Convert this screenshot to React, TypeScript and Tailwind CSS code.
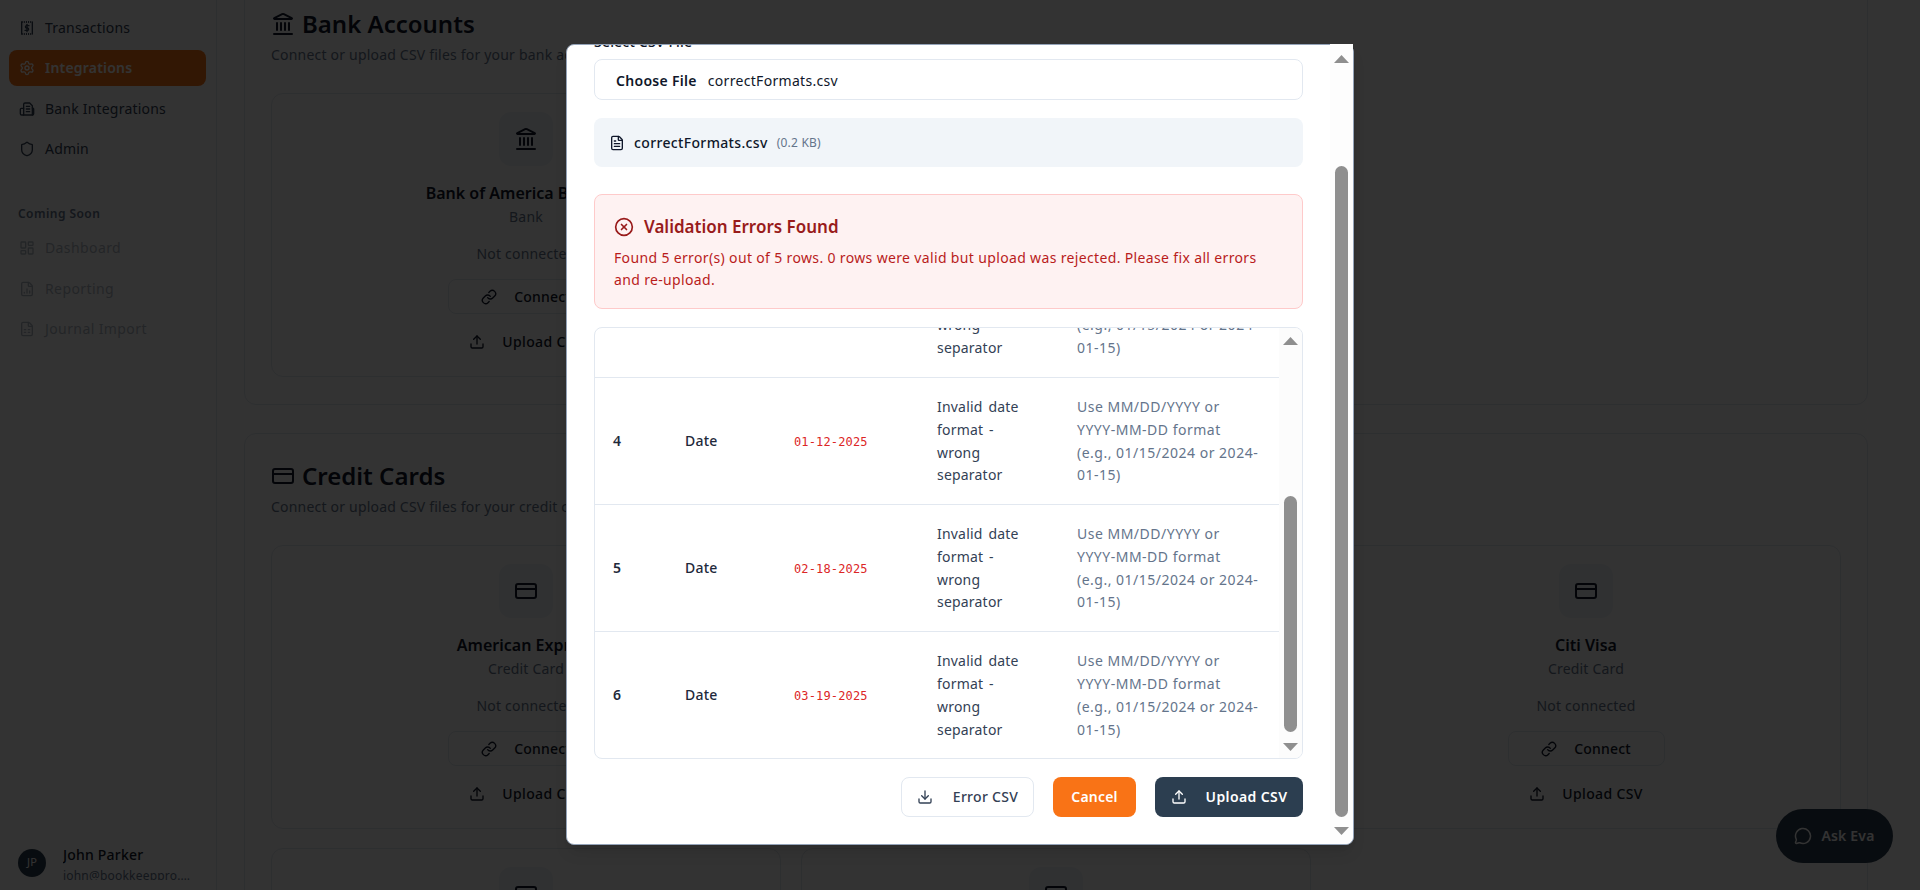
import React from 'react';
import {
  CircleX,
  CreditCard,
  Download,
  FileChartColumn,
  FileSpreadsheet,
  FileText,
  Landmark,
  LayoutDashboard,
  Link,
  MessageCircle,
  Settings,
  Shield,
  Upload,
} from 'lucide-react';

function TransactionsIcon({ size = 16 }: { size?: number }) {
  return (
    <svg width={size} height={size} viewBox="0 0 24 24" fill="none" stroke="currentColor" strokeWidth="2" strokeLinecap="round">
      <path d="M4 3v18" />
      <path d="M20 3v18" />
      <path d="M4 3h16" strokeDasharray="1.5 1.7" strokeLinecap="butt" strokeWidth="3" />
      <path d="M4 21h16" strokeDasharray="1.5 1.7" strokeLinecap="butt" strokeWidth="3" />
      <path d="M12 6.5v11" />
      <path d="M15 8.5h-4a1.8 1.8 0 0 0 0 3.5h2a1.8 1.8 0 0 1 0 3.5H9" />
    </svg>
  );
}

function BuildingIcon({ size = 16 }: { size?: number }) {
  return (
    <svg width={size} height={size} viewBox="0 0 24 24" fill="none" stroke="currentColor" strokeWidth="2" strokeLinecap="round" strokeLinejoin="round">
      <path d="M7 21V5a2 2 0 0 1 2-2h7l4 4v14" />
      <path d="M7 11H3.5A1.5 1.5 0 0 0 2 12.5V19a2 2 0 0 0 2 2h16a2 2 0 0 0 2-2v-7a1.5 1.5 0 0 0-2-1.4" />
      <path d="M11 8h5" />
      <path d="M11 12h5" />
      <path d="M11 16h5" />
    </svg>
  );
}

const navItems = [
  { label: 'Transactions', icon: TransactionsIcon },
  { label: 'Integrations', icon: Settings, active: true },
  { label: 'Bank Integrations', icon: BuildingIcon },
  { label: 'Admin', icon: Shield },
];

const soonItems = [
  { label: 'Dashboard', icon: LayoutDashboard },
  { label: 'Reporting', icon: FileChartColumn },
  { label: 'Journal Import', icon: FileSpreadsheet },
];

const errorRows = [
  { row: 3, value: '12-30-2024' },
  { row: 4, value: '01-12-2025' },
  { row: 5, value: '02-18-2025' },
  { row: 6, value: '03-19-2025' },
];

function Sidebar() {
  return (
    <aside className="w-[217px] shrink-0 h-full border-r border-[#e2e8f0] bg-white flex flex-col pl-[9px] pr-[10px] pt-[9.5px]">
      <nav className="flex flex-col gap-[4.5px]">
        {navItems.map((item) => (
          <div
            key={item.label}
            className={`h-9 flex items-center gap-[10px] pl-[10px] rounded-lg text-sm ${
              item.active ? 'bg-[#f97316] text-white font-semibold' : 'text-[#334155]'
            }`}
          >
            <item.icon size={16} />
            <span>{item.label}</span>
          </div>
        ))}
      </nav>
      <div className="mt-[39px] pl-[9px] text-xs font-semibold tracking-[0.45px] text-[#64748b]">Coming Soon</div>
      <nav className="mt-[8px] flex flex-col gap-[4.5px] opacity-50 tracking-[0.4px]">
        {soonItems.map((item) => (
          <div key={item.label} className="h-9 flex items-center gap-[10px] pl-[10px] text-sm text-[#64748b]">
            <item.icon size={16} />
            <span>{item.label}</span>
          </div>
        ))}
      </nav>
      <div className="mt-auto mb-[10px] flex items-center gap-[17px] pl-[9px]">
        <div className="w-[28px] h-[28px] rounded-full bg-[#2c3e50] text-white text-[11px] flex items-center justify-center">
          JP
        </div>
        <div className="w-[133px] h-[35px] overflow-hidden">
          <div className="text-sm font-medium leading-5 text-[#0f172a]">John Parker</div>
          <div className="mt-[1px] text-xs leading-5 text-[#64748b] truncate">john@bookkeeppro.com</div>
        </div>
      </div>
    </aside>
  );
}

function AccountCard({ name, kind, icon: Icon }: { name: string; kind: string; icon: typeof Landmark }) {
  return (
    <div className="h-[284px] rounded-xl border border-[#e2e8f0] bg-white flex flex-col items-center pt-[18px]">
      <div className="w-[54px] h-[54px] rounded-xl bg-[#f1f5f9] flex items-center justify-center text-[#0f172a]">
        <Icon size={24} />
      </div>
      <div className="mt-[15px] text-base font-semibold leading-6 tracking-normal text-[#0f172a]">{name}</div>
      <div className="text-sm leading-6 text-[#64748b]">{kind}</div>
      <div className="mt-[15px] text-sm leading-5 text-[#64748b]">Not connected</div>
      <button className="mt-[15px] w-[157px] h-[35px] rounded-lg border border-[#e2e8f0] flex items-center justify-center gap-[17px] text-sm font-medium text-[#0f172a]">
        <Link size={16} />
        Connect
      </button>
      <button className="mt-[10px] h-[35px] flex items-center gap-[17px] text-sm font-medium tracking-[0.35px] text-[#0f172a]">
        <Upload size={16} />
        Upload CSV
      </button>
    </div>
  );
}

function Section({
  title,
  subtitle,
  icon: Icon,
  children,
}: {
  title: string;
  subtitle: string;
  icon: typeof Landmark;
  children: React.ReactNode;
}) {
  return (
    <section className="rounded-xl border border-[#e2e8f0] bg-white px-[26px] pt-[26px] pb-[27px]">
      <div className="flex items-center gap-[7px] h-8">
        <Icon size={24} className="text-[#0f172a]" />
        <h2 className="text-2xl font-semibold tracking-normal text-[#0f172a]">{title}</h2>
      </div>
      <p className="mt-[5px] text-sm leading-5 text-[#64748b]">{subtitle}</p>
      <div className="mt-[28px] grid grid-cols-3 gap-x-5 gap-y-[19px]">{children}</div>
    </section>
  );
}

function ScrollArrow({ up, className }: { up?: boolean; className: string }) {
  return (
    <svg width="15" height="8" viewBox="0 0 15 8" className={`absolute ${className}`}>
      <polygon points={up ? '7.5,0 15,8 0,8' : '0,0 15,0 7.5,8'} fill="#8f8f8f" />
    </svg>
  );
}

function ErrorTable() {
  return (
    <div className="relative mt-[18px] h-[432px] rounded-lg border border-[#e2e8f0] overflow-hidden flex flex-col justify-end">
      <table className="w-[684px] shrink-0 table-fixed border-collapse text-sm leading-[22.75px]">
        <colgroup>
          <col className="w-[72px]" />
          <col className="w-[108px]" />
          <col className="w-[144px]" />
          <col className="w-[140px]" />
          <col className="w-[220px]" />
        </colgroup>
        <tbody>
          {errorRows.map((r, i) => (
            <tr key={r.row} className={`h-[127px] ${i > 0 ? 'border-t border-[#e2e8f0]' : ''}`}>
              <td className="pl-[18px] pt-[2px] font-semibold text-[#1e293b]">{r.row}</td>
              <td className="pl-[18px] pt-[2px] font-medium text-[#1e293b]">Date</td>
              <td className="pl-[19px] pt-[2px] font-['DejaVu_Sans_Mono',monospace] text-xs tracking-[0.15px] text-[#dc2626]">
                {r.value}
              </td>
              <td className="pl-[18px] pt-[2px] text-[#334155] tracking-[0.2px] [word-spacing:2px]">
                Invalid date
                <br />
                format -
                <br />
                wrong
                <br />
                separator
              </td>
              <td className="pl-[18px] pt-[2px] text-[#64748b] whitespace-nowrap tracking-[0.5px]">
                Use MM/DD/YYYY or
                <br />
                YYYY-MM-DD format
                <br />
                (e.g., 01/15/2024 or 2024-
                <br />
                01-15)
              </td>
            </tr>
          ))}
        </tbody>
      </table>
      {/* inner scrollbar */}
      <div className="absolute top-0 bottom-0 right-0 w-[23px] bg-[#fcfcfc]" />
      <ScrollArrow up className="top-[9px] right-[4px]" />
      <div className="absolute top-[168px] right-[5px] w-[13px] h-[236px] rounded-full bg-[#8f8f8f]" />
      <ScrollArrow className="bottom-[7px] right-[4px]" />
    </div>
  );
}

function UploadDialog() {
  return (
    <div className="absolute left-[566px] top-[44px] w-[788px] h-[801px]">
      <div className="h-full rounded-lg border border-[#94a3b8] bg-white overflow-hidden shadow-lg">
        <div className="pl-[27px] w-[736px] -mt-[13px]">
          <label className="block text-sm font-medium leading-5 text-[#0f172a]">Select CSV File</label>
          <div className="mt-[7px] h-[41px] pt-[3px] rounded-lg border border-[#e2e8f0] flex items-center pl-[21px] text-sm tracking-[0.3px] text-[#0f172a]">
            <span className="font-semibold">Choose File</span>
            <span className="ml-[11px]">correctFormats.csv</span>
          </div>
          <div className="mt-[18px] h-[49px] rounded-lg bg-[#f1f5f9] flex items-center pl-[15px] text-[#0f172a]">
            <FileText size={16} />
            <span className="ml-[9px] text-sm font-medium tracking-[0.35px]">correctFormats.csv</span>
            <span className="ml-[9px] text-xs text-[#64748b]">(0.2 KB)</span>
          </div>
          <div className="mt-[27px] h-[115px] rounded-lg border border-[#fecaca] bg-[#fef2f2] pl-[19px] pr-[18px] pt-[20px]">
            <div className="flex items-center gap-[10px] h-6 text-[17px] font-semibold tracking-normal text-[#991b1b]">
              <CircleX size={20} />
              Validation Errors Found
            </div>
            <p className="mt-[8px] text-sm leading-[22px] tracking-[0.35px] text-[#b91c1c]">
              Found 5 error(s) out of 5 rows. 0 rows were valid but upload was rejected. Please fix all errors
              <br />
              and re-upload.
            </p>
          </div>
          <ErrorTable />
          <div className="mt-[18px] flex justify-end gap-[19px] text-sm font-semibold">
            <button className="w-[133px] h-10 rounded-lg border border-[#e2e8f0] flex items-center justify-center gap-[20px] font-medium tracking-[0.3px] text-[#334155]">
              <Download size={16} />
              Error CSV
            </button>
            <button className="w-[83px] h-10 rounded-lg bg-[#f97316] text-white">Cancel</button>
            <button className="w-[148px] h-10 rounded-lg bg-[#2c3e50] text-white flex items-center justify-center gap-[19px] tracking-[0.4px]">
              <Upload size={16} />
              Upload CSV
            </button>
          </div>
        </div>
      </div>
      {/* dialog scrollbar */}
      <div className="absolute top-0 bottom-[1px] right-[1px] w-[23px] rounded-br-lg bg-[#fdfdfd]" />
      <ScrollArrow up className="top-[11px] right-[5px]" />
      <div className="absolute top-[122px] right-[6px] w-[13px] h-[651px] rounded-full bg-[#8f8f8f]" />
      <ScrollArrow className="bottom-[10px] right-[5px]" />
    </div>
  );
}

export default function App() {
  return (
    <div className="relative h-screen w-full overflow-hidden bg-white flex tracking-[0.2px] font-['Noto_Sans',sans-serif]">
      <Sidebar />
      <main className="flex-1 h-full overflow-hidden pl-[27px] pr-[52px]">
        <div className="-mt-[19px] flex flex-col gap-[28px]">
          <Section title="Bank Accounts" subtitle="Connect or upload CSV files for your bank accounts" icon={Landmark}>
            <AccountCard name="Bank of America Business" kind="Bank" icon={Landmark} />
            <AccountCard name="Chase Business" kind="Bank" icon={Landmark} />
          </Section>
          <Section title="Credit Cards" subtitle="Connect or upload CSV files for your credit cards" icon={CreditCard}>
            <AccountCard name="American Express" kind="Credit Card" icon={CreditCard} />
            <AccountCard name="Chase Ink" kind="Credit Card" icon={CreditCard} />
            <AccountCard name="Citi Visa" kind="Credit Card" icon={CreditCard} />
            <AccountCard name="Capital One" kind="Credit Card" icon={CreditCard} />
            <AccountCard name="Wells Fargo" kind="Credit Card" icon={CreditCard} />
          </Section>
        </div>
      </main>

      {/* Ask Eva launcher */}
      <button className="absolute left-[1776px] top-[809px] w-[117px] h-[54px] rounded-full bg-[#2c3e50] text-white flex items-center justify-center gap-[9px] text-sm font-semibold">
        <MessageCircle size={18} />
        Ask Eva
      </button>

      {/* Overlay */}
      <div className="absolute inset-0 bg-black/80" />

      <UploadDialog />
    </div>
  );
}
